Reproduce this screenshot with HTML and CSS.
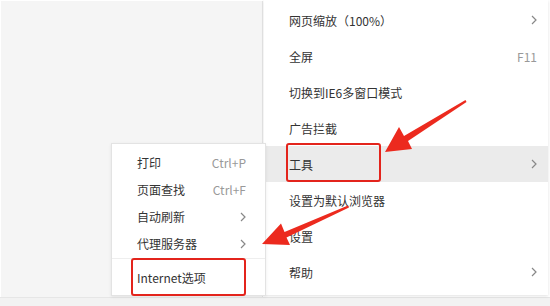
FILE: index.html
```html
<!DOCTYPE html>
<html lang="zh-CN">
<head>
    <meta charset="UTF-8">
    <title>浏览器菜单</title>
    <link rel="stylesheet" href="styles.css">
</head>
<body>
    <div class="page">
        <div class="page-area"></div>
        <div class="page-bottom"></div>

        <!-- 主菜单 -->
        <div class="menu main-menu">
            <div class="item">
                <span>网页缩放（100%）</span>
                <svg class="chev" width="6" height="10" viewBox="0 0 6 10"><polyline points="1,1 5,5 1,9"/></svg>
            </div>
            <div class="item">
                <span>全屏</span>
                <span class="key">F11</span>
            </div>
            <div class="item"><span>切换到IE6多窗口模式</span></div>
            <div class="item"><span>广告拦截</span></div>
            <div class="item active">
                <span>工具</span>
                <svg class="chev" width="6" height="10" viewBox="0 0 6 10"><polyline points="1,1 5,5 1,9"/></svg>
            </div>
            <div class="item"><span>设置为默认浏览器</span></div>
            <div class="item"><span>设置</span></div>
            <div class="item">
                <span>帮助</span>
                <svg class="chev" width="6" height="10" viewBox="0 0 6 10"><polyline points="1,1 5,5 1,9"/></svg>
            </div>
        </div>

        <!-- 工具子菜单 -->
        <div class="menu sub-menu">
            <div class="sub-item">
                <span>打印</span>
                <span class="key">Ctrl+P</span>
            </div>
            <div class="sub-item">
                <span>页面查找</span>
                <span class="key">Ctrl+F</span>
            </div>
            <div class="sub-item">
                <span>自动刷新</span>
                <svg class="chev" width="6" height="10" viewBox="0 0 6 10"><polyline points="1,1 5,5 1,9"/></svg>
            </div>
            <div class="sub-item">
                <span>代理服务器</span>
                <svg class="chev" width="6" height="10" viewBox="0 0 6 10"><polyline points="1,1 5,5 1,9"/></svg>
            </div>
            <div class="sep"></div>
            <div class="sub-item last"><span>Internet选项</span></div>
        </div>

        <!-- 标注 -->
        <div class="mark mark-tools"></div>
        <div class="mark mark-options"></div>
        <svg class="arrows" width="550" height="306" viewBox="0 0 550 306">
            <polygon points="385,152 412,149 408,141 466.5,102 465.5,100 404,136 399,127"/>
            <polygon points="262,244 290,245 286.5,237.5 349,207.5 348,205.5 284.5,232 281,223.5"/>
        </svg>
    </div>
</body>
</html>
```

FILE: styles.css
```css
* {
    box-sizing: border-box;
}
body {
    margin: 0;
    font-family: "Noto Sans CJK SC", "Liberation Sans", sans-serif;
    font-size: 12px;
    color: #333;
    background-color: #fff;
}
.page {
    position: relative;
    width: 550px;
    height: 306px;
    overflow: hidden;
}
.page-area {
    height: 296px;
    margin: 1px 0 0 1px;
    background-color: #f5f5f5;
    border-right: 1px solid #e4e4e4;
    width: 262px;
}
.page-bottom {
    height: 9px;
    background-color: #f2f2f2;
    border-top: 1px solid #e6e6e6;
}
.menu {
    position: absolute;
    background-color: #fff;
}
.main-menu {
    left: 264px;
    top: 0;
    width: 284px;
    height: 295px;
    padding-top: 2px;
    box-shadow: 0 1px 3px rgba(0, 0, 0, 0.12);
}
.item {
    display: flex;
    align-items: center;
    justify-content: space-between;
    height: 36px;
    padding: 0 11px 0 25px;
}
.item.active {
    background-color: #ebebeb;
}
.key {
    color: #999;
}
.chev {
    fill: none;
    stroke: #888;
    stroke-width: 1.2;
}
.sub-menu {
    left: 111px;
    top: 143px;
    width: 155px;
    height: 153px;
    padding-top: 5px;
    border: 1px solid #e3e3e3;
    box-shadow: 0 1px 3px rgba(0, 0, 0, 0.08);
}
.sub-item {
    display: flex;
    align-items: center;
    justify-content: space-between;
    height: 27px;
    padding: 0 19px 0 25px;
}
.sub-item.last {
    height: 34px;
}
.sep {
    height: 1px;
    margin: 1px 0 1px;
    background-color: #eee;
}
.mark {
    position: absolute;
    border: 2px solid #e3241c;
    border-radius: 3px;
}
.mark-tools {
    left: 286px;
    top: 143px;
    width: 95px;
    height: 39px;
}
.mark-options {
    left: 131px;
    top: 258px;
    width: 115px;
    height: 38px;
}
.arrows {
    position: absolute;
    left: 0;
    top: 0;
    fill: #ec2a1e;
}
```
